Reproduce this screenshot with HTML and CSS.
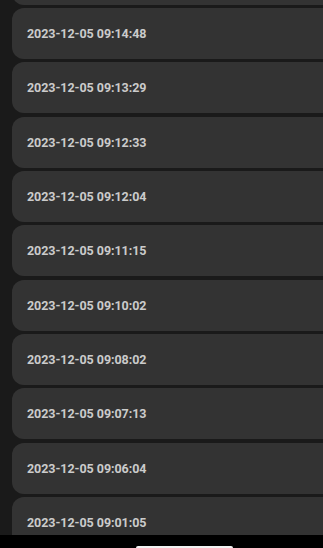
FILE: index.html
```html
<!DOCTYPE html>
<html>
<head>
<meta charset="utf-8">
<link rel="stylesheet" href="styles.css">
</head>
<body>
<div class="screen">
  <div class="viewport">
    <ul class="list">
      <li class="card"></li>
      <li class="card"><span class="stamp">2023-12-05 09:14:48</span></li>
      <li class="card"><span class="stamp">2023-12-05 09:13:29</span></li>
      <li class="card"><span class="stamp">2023-12-05 09:12:33</span></li>
      <li class="card"><span class="stamp">2023-12-05 09:12:04</span></li>
      <li class="card"><span class="stamp">2023-12-05 09:11:15</span></li>
      <li class="card"><span class="stamp">2023-12-05 09:10:02</span></li>
      <li class="card"><span class="stamp">2023-12-05 09:08:02</span></li>
      <li class="card"><span class="stamp">2023-12-05 09:07:13</span></li>
      <li class="card"><span class="stamp">2023-12-05 09:06:04</span></li>
      <li class="card"><span class="stamp">2023-12-05 09:01:05</span></li>
    </ul>
  </div>
  <div class="navbar"><div class="pill"></div></div>
</div>
</body>
</html>
```
FILE: styles.css
```css
html, body {
  margin: 0;
  padding: 0;
  background: #1a1a1a;
  overflow: hidden;
}
.screen {
  width: 323px;
  height: 548px;
  display: flex;
  flex-direction: column;
  overflow: hidden;
}
.viewport {
  flex: 1;
  overflow: hidden;
  padding-left: 12px;
  background: #1a1a1a;
}
.list {
  list-style: none;
  margin: -46.33px -30px 0 0;
  padding: 0;
  display: flex;
  flex-direction: column;
  gap: 3.33px;
}
.card {
  height: 51px;
  background: #333333;
  border-radius: 12px;
  display: flex;
  align-items: center;
  padding-left: 15px;
  flex-shrink: 0;
}
.stamp {
  font-family: Roboto, "Liberation Sans", sans-serif;
  font-weight: 700;
  font-size: 12.5px;
  color: #cbcbcb;
  letter-spacing: -0.05px;
}
.navbar {
  height: 13px;
  background: #000;
  display: flex;
  justify-content: center;
  align-items: flex-end;
  flex-shrink: 0;
}
.pill {
  width: 97px;
  height: 2px;
  background: #f2f2f2;
  border-radius: 2px 2px 0 0;
  margin-left: 46px;
}
```
